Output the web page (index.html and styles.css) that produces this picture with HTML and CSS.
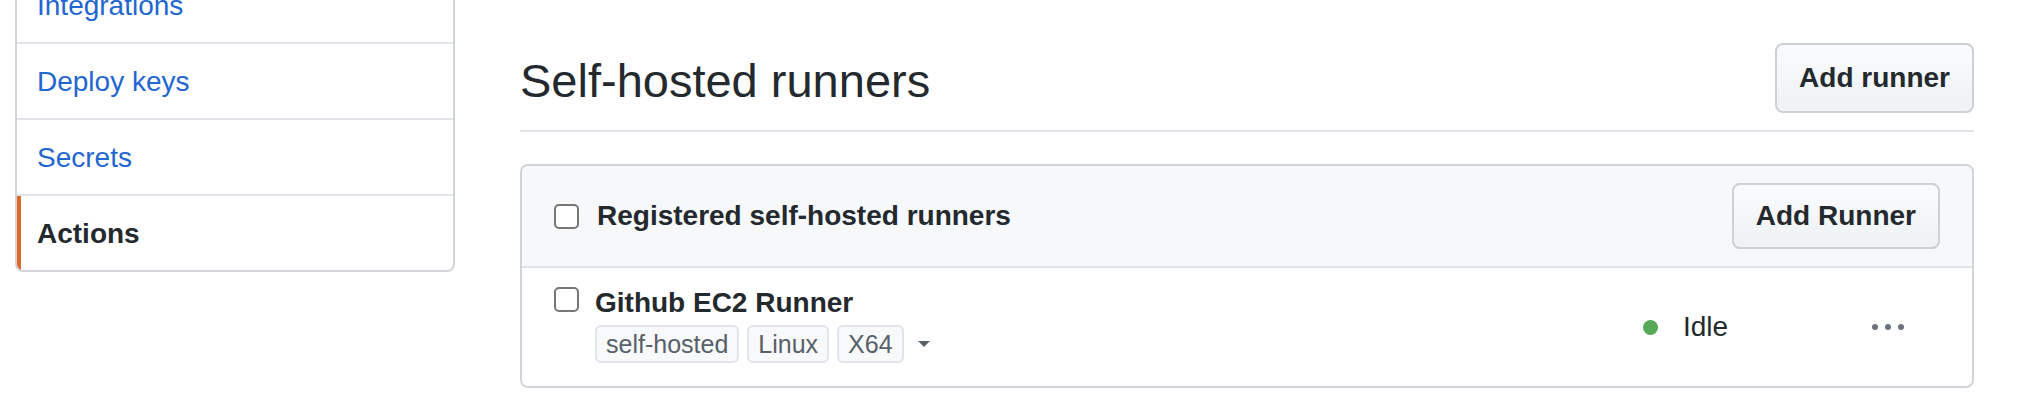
FILE: index.html
```html
<!DOCTYPE html>
<html lang="en">
<head>
<meta charset="utf-8">
<title>Actions settings</title>
<link rel="stylesheet" href="styles.css">
</head>
<body>
<div class="page">
  <nav class="menu">
    <a class="menu-item" href="#">Integrations</a>
    <a class="menu-item" href="#">Deploy keys</a>
    <a class="menu-item" href="#">Secrets</a>
    <a class="menu-item selected" href="#">Actions</a>
  </nav>
  <main class="main">
    <div class="subhead">
      <h1 class="subhead-title">Self-hosted runners</h1>
      <button class="btn btn-lg">Add runner</button>
    </div>
    <div class="box">
      <div class="box-header">
        <span class="check"></span>
        <span class="box-title">Registered self-hosted runners</span>
        <button class="btn btn-md">Add Runner</button>
      </div>
      <div class="box-row">
        <span class="check row-check"></span>
        <div class="runner">
          <div class="runner-name">Github EC2 Runner</div>
          <div class="labels">
            <span class="label">self-hosted</span>
            <span class="label">Linux</span>
            <span class="label">X64</span>
            <span class="caret"></span>
          </div>
        </div>
        <div class="status">
          <span class="status-dot"></span>
          <span class="status-text">Idle</span>
        </div>
        <div class="more">
          <span class="dot"></span><span class="dot"></span><span class="dot"></span>
        </div>
      </div>
    </div>
  </main>
</div>
</body>
</html>
```

FILE: styles.css
```css
* { box-sizing: border-box; }
html, body { margin: 0; padding: 0; background: #fff; }
body {
  font-family: "Liberation Sans", Arial, sans-serif;
  color: #24292e;
  overflow: hidden;
  height: 416px;
}
.page {
  display: flex;
  align-items: flex-start;
  padding: 0 56px 0 15px;
}
.menu {
  width: 440px;
  flex: none;
  margin-top: -34px;
  border: 2px solid #d1d5da;
  border-radius: 0 0 8px 8px;
  display: flex;
  flex-direction: column;
  overflow: hidden;
}
.menu-item {
  display: block;
  height: 76px;
  padding: 18px 20px 0;
  border-top: 2px solid #e1e4e8;
  font-size: 28px;
  line-height: 40px;
  color: #1f66d1;
  text-decoration: none;
}
.menu-item:first-child { border-top: 0; height: 74px; }
.menu-item.selected {
  color: #24292e;
  font-weight: bold;
  box-shadow: inset 4px 0 0 #e0692a;
}
.main {
  flex: 1;
  margin-left: 65px;
  padding-top: 43px;
}
.subhead {
  display: flex;
  align-items: center;
  justify-content: space-between;
  padding-bottom: 17px;
  border-bottom: 2px solid #e1e4e8;
}
.subhead-title {
  margin: 6px 0 0;
  font-size: 47px;
  line-height: 56px;
  font-weight: normal;
}
.btn {
  font-family: inherit;
  font-size: 28px;
  font-weight: bold;
  line-height: 40px;
  color: #24292e;
  background: linear-gradient(#fafbfc, #eff3f6 90%);
  border: 2px solid #cdd0d4;
  border-radius: 8px;
  padding: 0 22px;
}
.btn-lg { padding-top: 13px; padding-bottom: 13px; }
.btn-md { padding-top: 11px; padding-bottom: 11px; }
.box {
  margin-top: 32px;
  border: 2px solid #d1d5da;
  border-radius: 8px;
  overflow: hidden;
}
.box-header {
  display: flex;
  align-items: center;
  padding: 17px 32px;
  background: #f6f8fa;
  border-bottom: 2px solid #e1e4e8;
}
.check {
  width: 25px;
  height: 25px;
  flex: none;
  border: 2px solid #767676;
  border-radius: 5px;
  background: #fff;
}
.box-title {
  flex: 1;
  margin-left: 18px;
  font-size: 28px;
  font-weight: bold;
  line-height: 40px;
}
.box-row {
  display: flex;
  align-items: flex-start;
  padding: 0 32px;
}
.row-check { margin-top: 19px; }
.runner {
  flex: 1;
  margin-left: 16px;
  padding: 15px 0 23px;
}
.runner-name {
  font-size: 28px;
  font-weight: bold;
  line-height: 40px;
}
.labels {
  display: flex;
  align-items: center;
  gap: 8px;
  margin-top: 2px;
}
.label {
  height: 38px;
  padding: 0 9px;
  border: 2px solid #e1e4e8;
  border-radius: 6px;
  background: #f8f9fb;
  color: #586069;
  font-size: 25px;
  line-height: 34px;
}
.caret {
  width: 0;
  height: 0;
  margin-left: 6px;
  border-left: 6px solid transparent;
  border-right: 6px solid transparent;
  border-top: 6px solid #586069;
}
.status {
  align-self: center;
  display: flex;
  align-items: center;
  gap: 25px;
  width: 229px;
}
.status-dot {
  width: 15px;
  height: 15px;
  border-radius: 50%;
  background: #55a957;
}
.status-text {
  font-size: 28px;
  line-height: 40px;
}
.more {
  align-self: center;
  display: flex;
  gap: 7px;
  margin-right: 36px;
}
.dot {
  width: 6px;
  height: 6px;
  border-radius: 50%;
  background: #6a737d;
}
```
